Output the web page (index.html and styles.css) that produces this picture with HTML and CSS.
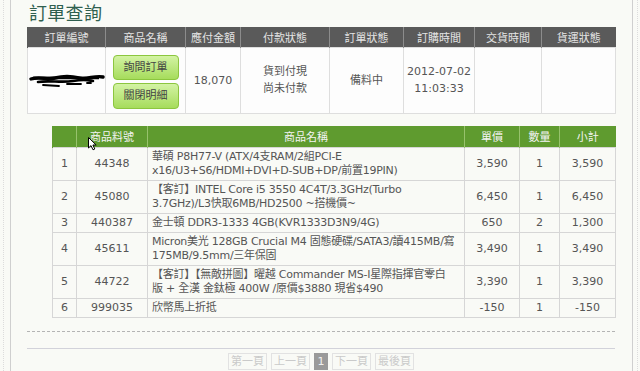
FILE: index.html
```html
<!DOCTYPE html>
<html lang="zh-Hant">
<head>
<meta charset="utf-8">
<title>訂單查詢</title>
<link rel="stylesheet" href="styles.css">
</head>
<body>
<div class="frame">
  <div class="page">
    <h2 class="title">訂單查詢</h2>
    <table class="order">
      <colgroup>
        <col class="o1"><col class="o2"><col class="o3"><col class="o4"><col class="o5"><col class="o6"><col class="o7"><col class="o8">
      </colgroup>
      <thead>
        <tr><th>訂單編號</th><th>商品名稱</th><th>應付金額</th><th>付款狀態</th><th>訂單狀態</th><th>訂購時間</th><th>交貨時間</th><th>貨運狀態</th></tr>
      </thead>
      <tbody>
        <tr>
          <td>
            <svg class="scribble" width="76" height="14" viewBox="0 0 76 14">
              <path d="M2 5 C10 2 18 6 26 4 S42 2 50 4 S66 1 74 3" stroke="#000" stroke-width="3.4" fill="none" stroke-linecap="round"/>
              <path d="M4 4 L70 4" stroke="#000" stroke-width="2.5" fill="none"/>
              <path d="M9 8 C20 6 32 9 44 7 S58 6 64 7" stroke="#000" stroke-width="2.6" fill="none" stroke-linecap="round"/>
              <path d="M14 11 L30 12 M38 10 L52 10 M58 9 L62 9" stroke="#000" stroke-width="1.8" fill="none" stroke-linecap="round"/>
            </svg>
          </td>
          <td class="btns"><a class="btn">詢問訂單</a><a class="btn second">關閉明細</a></td>
          <td>18,070</td>
          <td>貨到付現<br>尚未付款</td>
          <td>備料中</td>
          <td>2012-07-02<br>11:03:33</td>
          <td></td>
          <td></td>
        </tr>
      </tbody>
    </table>

    <table class="items">
      <colgroup>
        <col class="i1"><col class="i2"><col class="i3"><col class="i4"><col class="i5"><col class="i6">
      </colgroup>
      <thead>
        <tr><th></th><th>商品料號</th><th>商品名稱</th><th>單價</th><th>數量</th><th>小計</th></tr>
      </thead>
      <tbody>
        <tr><td>1</td><td>44348</td><td class="name">華碩 P8H77-V (ATX/4支RAM/2組PCI-E<br>x16/U3+S6/HDMI+DVI+D-SUB+DP/前置19PIN)</td><td>3,590</td><td>1</td><td>3,590</td></tr>
        <tr><td>2</td><td>45080</td><td class="name">【客訂】INTEL Core i5 3550 4C4T/3.3GHz(Turbo<br>3.7GHz)/L3快取6MB/HD2500 ~搭機價~</td><td>6,450</td><td>1</td><td>6,450</td></tr>
        <tr><td>3</td><td>440387</td><td class="name">金士頓 DDR3-1333 4GB(KVR1333D3N9/4G)</td><td>650</td><td>2</td><td>1,300</td></tr>
        <tr><td>4</td><td>45611</td><td class="name">Micron美光 128GB Crucial M4 固態硬碟/SATA3/讀415MB/寫<br>175MB/9.5mm/三年保固</td><td>3,490</td><td>1</td><td>3,490</td></tr>
        <tr><td>5</td><td>44722</td><td class="name">【客訂】【無敵拼圖】曜越 Commander MS-I星際指揮官零白<br>版 + 全漢 金鈦極 400W /原價$3880 現省$490</td><td>3,390</td><td>1</td><td>3,390</td></tr>
        <tr><td>6</td><td>999035</td><td class="name">欣幣馬上折抵</td><td>-150</td><td>1</td><td>-150</td></tr>
      </tbody>
    </table>

    <div class="dash"></div>
    <div class="rule"></div>

    <div class="pager">
      <span class="pg">第一頁</span>
      <span class="pg">上一頁</span>
      <span class="pg cur">1</span>
      <span class="pg">下一頁</span>
      <span class="pg">最後頁</span>
    </div>
  </div>
</div>

<svg class="cursor" width="10" height="14" viewBox="0 0 10 14">
  <path d="M0.5 0.5 L0.5 11 L3 8.6 L5 12.8 L6.8 12 L4.9 8 L8.2 8 Z" fill="#fff" stroke="#000" stroke-width="1"/>
</svg>
</body>
</html>
```

FILE: styles.css
```css
* { box-sizing: border-box; }

html, body {
  margin: 0;
  background: #f9faf6;
}

body {
  font-family: "DejaVu Sans", "Noto Sans CJK TC", sans-serif;
  font-size: 11px;
  color: #555;
  height: 371px;
  overflow: hidden;
}

.frame {
  margin-left: 3px;
  width: 635px;
  height: 371px;
  border-left: 1px dotted #dcdcdc;
  border-right: 1px dotted #dcdcdc;
  padding: 0 4px 0 6px;
}

.page {
  height: 100%;
  border-left: 1px solid #cfcfcf;
  border-right: 1px solid #cfcfcf;
  padding: 0 17px 0 16px;
}

.title {
  margin: 0 0 3px;
  padding-left: 2px;
  font: normal 18px/24px "Noto Sans CJK TC", sans-serif;
  letter-spacing: 0.3px;
  color: #2f5f4f;
}

/* order summary table */
.order {
  width: 588px;
  border-collapse: collapse;
  table-layout: fixed;
}

.o1 { width: 78px; }
.o2 { width: 80px; }
.o3 { width: 55px; }
.o4 { width: 89px; }
.o5 { width: 74px; }
.o6 { width: 71px; }
.o7 { width: 67px; }
.o8 { width: 74px; }

.order th {
  height: 20px;
  padding: 0;
  background: #5a5a5a;
  color: #e4e4e4;
  font-weight: normal;
  font-size: 11px;
  border-left: 1px solid #8c8c8c;
}

.order th:first-child { border-left-color: #5a5a5a; }

.order td {
  height: 66px;
  padding: 0;
  background: #fdfdfd;
  border: 1px solid #dedede;
  text-align: center;
  vertical-align: middle;
  line-height: 17px;
}

.scribble { display: block; margin: 2px auto 0; }

.order td.btns { padding-top: 3px; }

.btn {
  display: block;
  width: 66px;
  height: 25px;
  margin: 0 auto 3px;
  line-height: 23px;
  border: 1px solid #8cc63f;
  border-radius: 4px;
  background: linear-gradient(#d3f3a4, #a6dc5c);
  color: #444;
  font-size: 11px;
}

.btn.second { height: 26px; line-height: 24px; margin-bottom: 0; }

/* item list */
.items {
  margin: 12px 0 0 25px;
  width: 563px;
  border-collapse: collapse;
  table-layout: fixed;
}

.i1 { width: 24px; }
.i2 { width: 71px; }
.i3 { width: 317px; }
.i4 { width: 55px; }
.i5 { width: 40px; }
.i6 { width: 56px; }

.items th {
  height: 22px;
  padding: 0;
  background: #5f9b2f;
  color: #f4f4f4;
  font-weight: normal;
  font-size: 11px;
  border-left: 1px solid #97c26c;
}

.items th:first-child { border-left-color: #5f9b2f; }

.items td {
  padding: 2px 4px;
  border: 1px solid #d6d6d6;
  line-height: 14px;
  text-align: center;
  vertical-align: middle;
  white-space: nowrap;
}

.items td.name {
  text-align: left;
  letter-spacing: -0.25px;
}

.dash {
  margin-top: 13px;
  border-top: 1px dashed #b4b4b4;
}

.rule {
  margin-top: 16px;
  border-top: 1px solid #d2d2da;
}

.pager {
  display: flex;
  justify-content: center;
  gap: 4px;
  margin-top: 4px;
}

.pg {
  width: 39px;
  height: 17px;
  line-height: 15px;
  border: 1px solid #e2e2e2;
  color: #cacaca;
  text-align: center;
  font-size: 11px;
}

.pg.cur {
  width: 14px;
  background: #9a9a9a;
  border-color: #9a9a9a;
  color: #f0f0f0;
}

.cursor {
  position: absolute;
  left: 88px;
  top: 137px;
}
```
